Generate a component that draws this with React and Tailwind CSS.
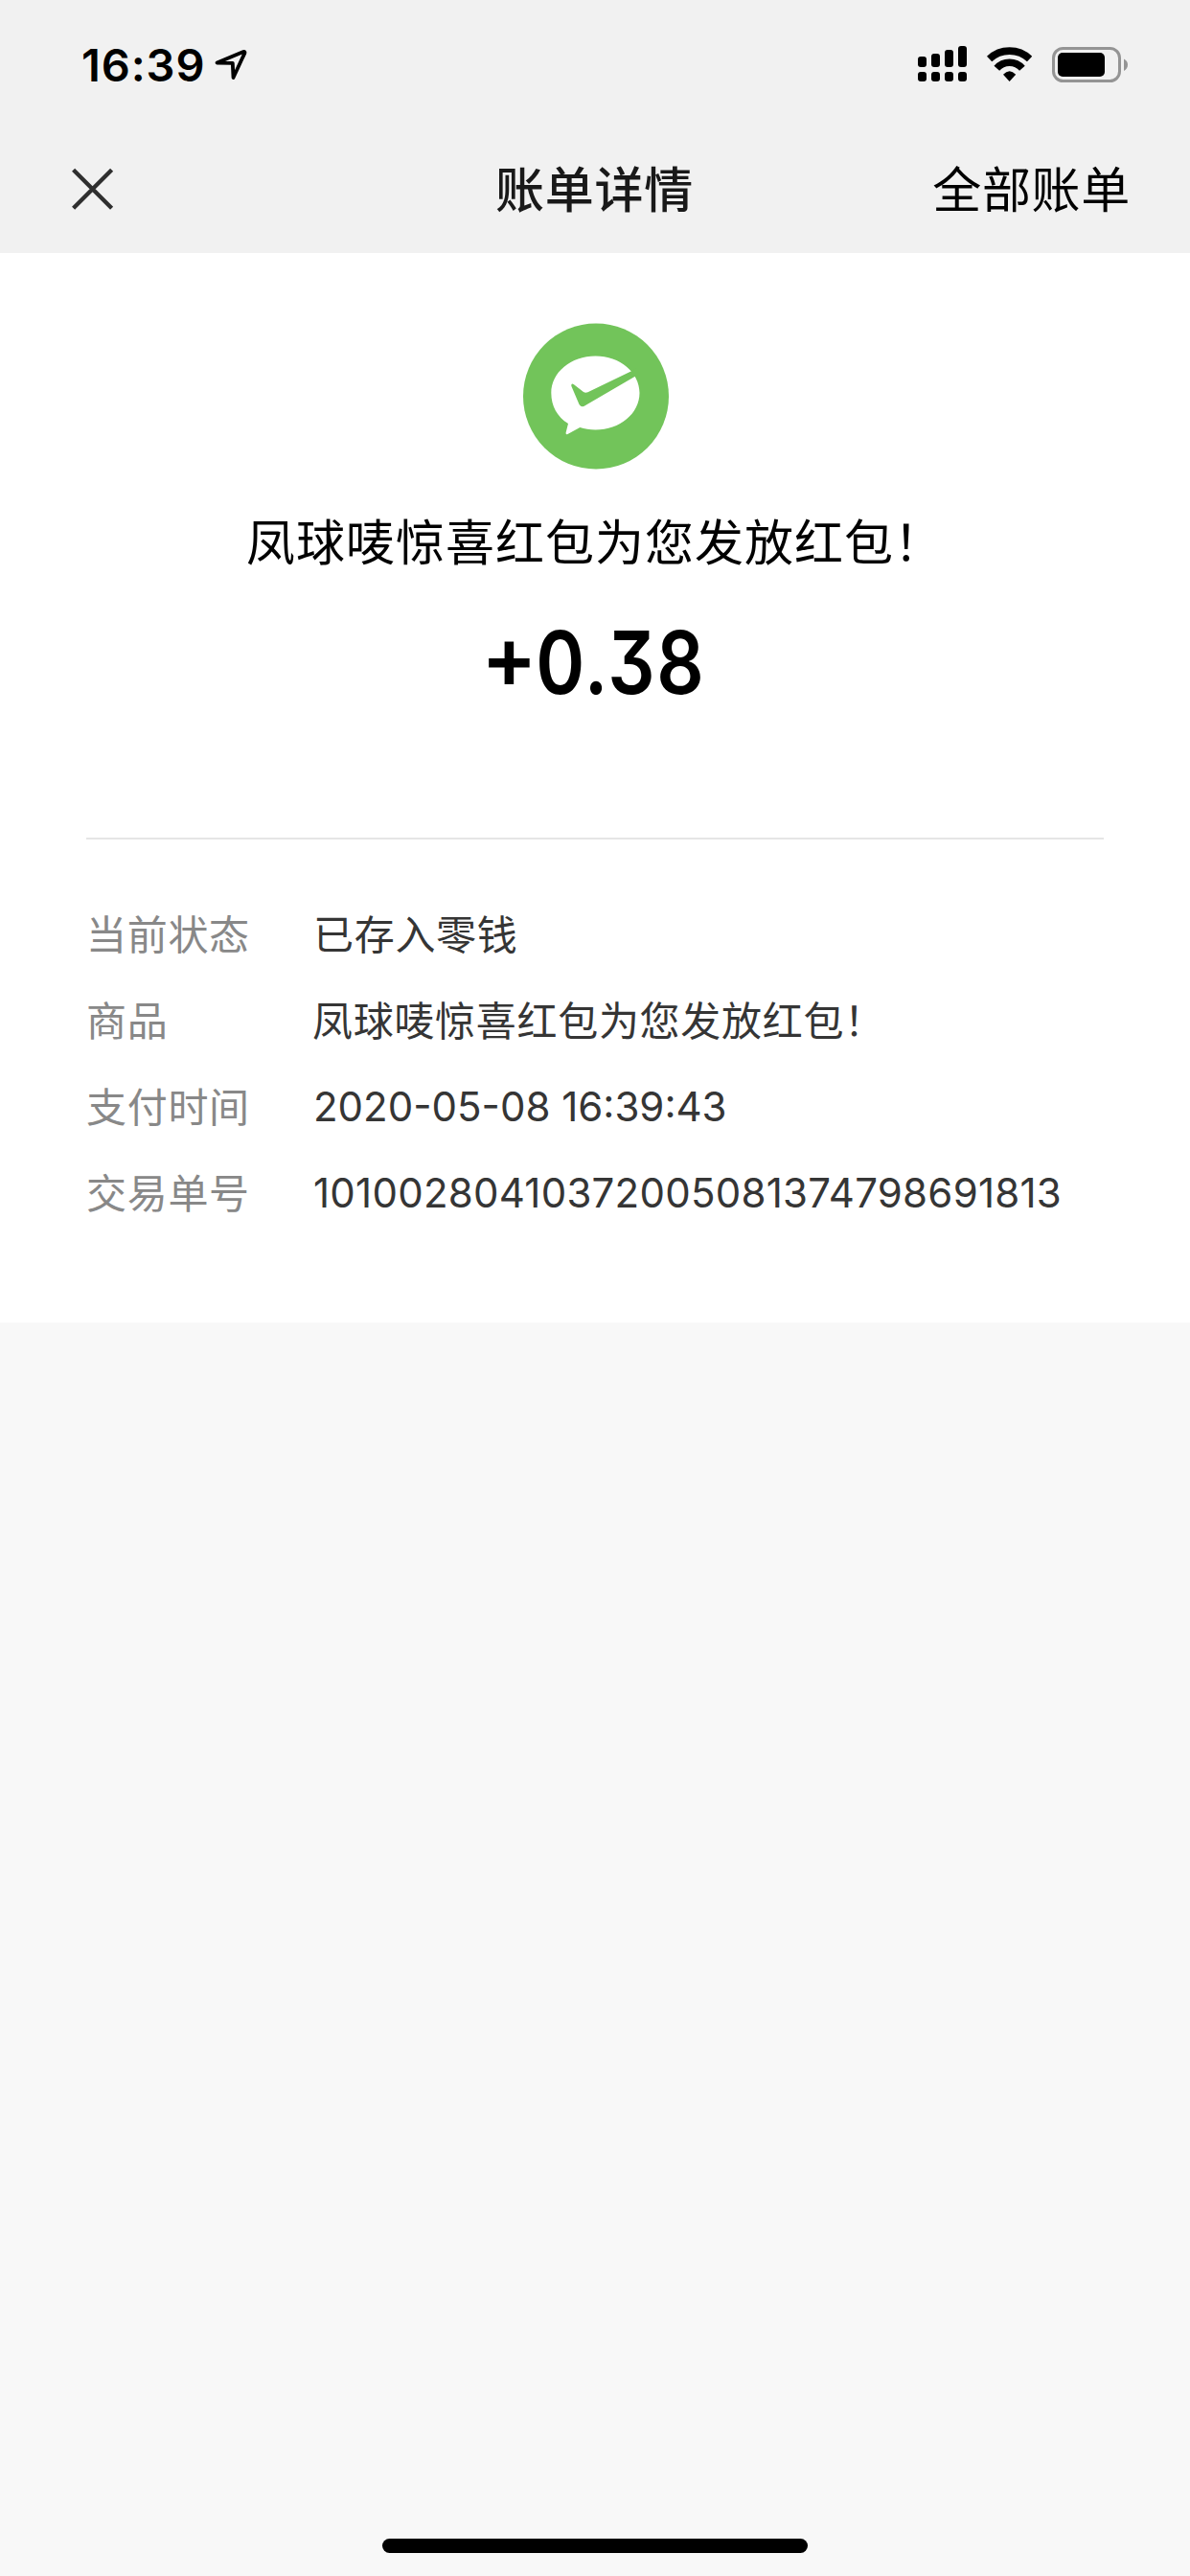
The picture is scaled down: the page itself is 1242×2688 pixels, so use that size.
import React from 'react';

const details = [
    { label: '当前状态', value: '已存入零钱', style: 'pl-px tracking-[0.7px]' },
    { label: '商品', value: '凤球唛惊喜红包为您发放红包！', style: 'tracking-[0.7px]' },
    { label: '支付时间', value: '2020-05-08 16:39:43', style: "pt-[3px] pl-px font-['Inter',sans-serif]" },
    { label: '交易单号', value: '10100280410372005081374798691813', style: "pt-[3px] pl-px font-['Inter',sans-serif] tracking-[0.25px]" },
];

const StatusBar = () => (
    <div className="flex h-[132px] items-start justify-between pl-[85px] pr-[64px]">
        <div className="flex items-start">
            <span className="mt-[38px] font-['Inter',sans-serif] text-[47px] leading-[60px] font-semibold tracking-[0.9px] text-black">16:39</span>
            <svg className="mt-[50px] ml-[9px]" width="36" height="36" viewBox="0 0 36 36" fill="none" stroke="#000" strokeWidth="3.8" strokeLinejoin="round">
                <path d="M3.5 15.5 L31 4 Q33 3.5 32.3 5.6 L20.5 31 L19.8 15.9 Z" />
            </svg>
        </div>
        <div className="flex items-start">
            <svg className="mt-[48px]" width="51" height="37" viewBox="0 0 51 37">
                <rect x="0" y="11" width="9" height="11" rx="3" />
                <rect x="14" y="8" width="9" height="14" rx="3" />
                <rect x="28" y="4" width="9" height="18" rx="3" />
                <rect x="42" y="0" width="9" height="22" rx="3" />
                <rect x="0" y="27" width="9" height="10" rx="3" />
                <rect x="14" y="27" width="9" height="10" rx="3" />
                <rect x="28" y="27" width="9" height="10" rx="3" />
                <rect x="42" y="27" width="9" height="10" rx="3" />
            </svg>
            <svg className="mt-[48px] ml-[21px]" width="48" height="38" viewBox="0 0 48 38">
                <path d="M2.6 13.5 A30.5 30.5 0 0 1 44.6 13.5" fill="none" stroke="#000" strokeWidth="7.6" />
                <path d="M10.3 23.2 A17.8 17.8 0 0 1 36.9 23.2" fill="none" stroke="#000" strokeWidth="7.6" />
                <path d="M17 29.8 Q23.6 22.6 30.2 29.8 L23.6 37 Z" />
            </svg>
            <svg className="mt-[49px] ml-[20px]" width="80" height="38" viewBox="0 0 80 38">
                <rect x="1.5" y="1.5" width="69" height="34" rx="10" fill="none" stroke="#949494" strokeWidth="3" />
                <rect x="6" y="6" width="49" height="25" rx="5" />
                <path d="M75 12.5 Q79 14.5 79 18.5 T75 25 Z" fill="#949494" />
            </svg>
        </div>
    </div>
);

const Header = () => (
    <div className="grid h-[132px] grid-cols-3 items-start pr-[62px] pl-[66px]">
        <svg className="mt-[43px] ml-[9px]" width="44" height="44" viewBox="0 0 44 44" stroke="#2f2f2f" strokeWidth="4.4">
            <path d="M1.6 2.2 L41.6 42.2 M41.6 2.2 L1.6 42.2" />
        </svg>
        <h1 className="mt-[26px] mr-[5px] text-center text-[51px] leading-[74px] font-medium tracking-[0.7px] text-[#191919]">账单详情</h1>
        <span className="mt-[26px] text-right text-[51px] leading-[74px] tracking-[0.7px] text-black">全部账单</span>
    </div>
);

const PayLogo = () => (
    <svg className="ml-[2px]" width="152" height="153" viewBox="0 0 152 153">
        <circle cx="76" cy="76.5" r="76" fill="#72c45a" />
        <path d="M75.5 34.5 C101 34.5 121.5 51.5 121.5 73 C121.5 94.5 101 111.5 75.5 111.5 C69.5 111.5 64 110.5 59.3 109 L46.5 116 Q44.3 117 44.6 114.5 L47 105 C35.5 98 29.3 86.5 29.3 73 C29.3 51.5 50 34.5 75.5 34.5 Z" fill="#fff" />
        <path d="M112 50.8 L67.5 72.3 Q65 73.3 63 72.1 L53 64.3 Q50 62.3 50.3 65.8 L58.5 85 Q61 89 65 86 L117.3 55.6 L122 52 L118 47.5 Z" fill="#72c45a" />
    </svg>
);

const App = () => {
    return (
        <div className="flex h-[2688px] w-[1242px] flex-col bg-[#f8f8f8] font-['Noto_Sans_CJK_SC',sans-serif]">
            <div className="bg-[#f1f1f1]">
                <StatusBar />
                <Header />
            </div>
            <div className="flex h-[1116px] flex-col items-center bg-white px-[90px] pt-[73px]">
                <PayLogo />
                <p className="mt-[36px] text-[51px] leading-[74px] tracking-[1px] whitespace-nowrap text-black">凤球唛惊喜红包为您发放红包！</p>
                <p className="mt-[36px] scale-x-85 font-['Inter',sans-serif] text-[91px] leading-[110px] font-semibold tracking-[2px] text-black [font-feature-settings:'cv09']">
                    <span className="inline-block -translate-y-[6px] scale-x-112">+</span>0.38
                </p>
                <div className="mt-[128px] h-[2px] w-full shrink-0 bg-[#e5e5e5]" />
                <dl className="mt-[52px] w-full">
                    {details.map((item) => (
                        <div key={item.label} className="flex h-[90px] items-center text-[42px] leading-[60px] whitespace-nowrap">
                            <dt className="w-[236px] tracking-[0.7px] text-[#888888]">{item.label}</dt>
                            <dd className={`text-[#353535] ${item.style}`}>{item.value}</dd>
                        </div>
                    ))}
                </dl>
            </div>
            <div className="mt-auto mb-[24px] h-[15px] w-[444px] self-center rounded-full bg-black" />
        </div>
    );
};

export default App;
